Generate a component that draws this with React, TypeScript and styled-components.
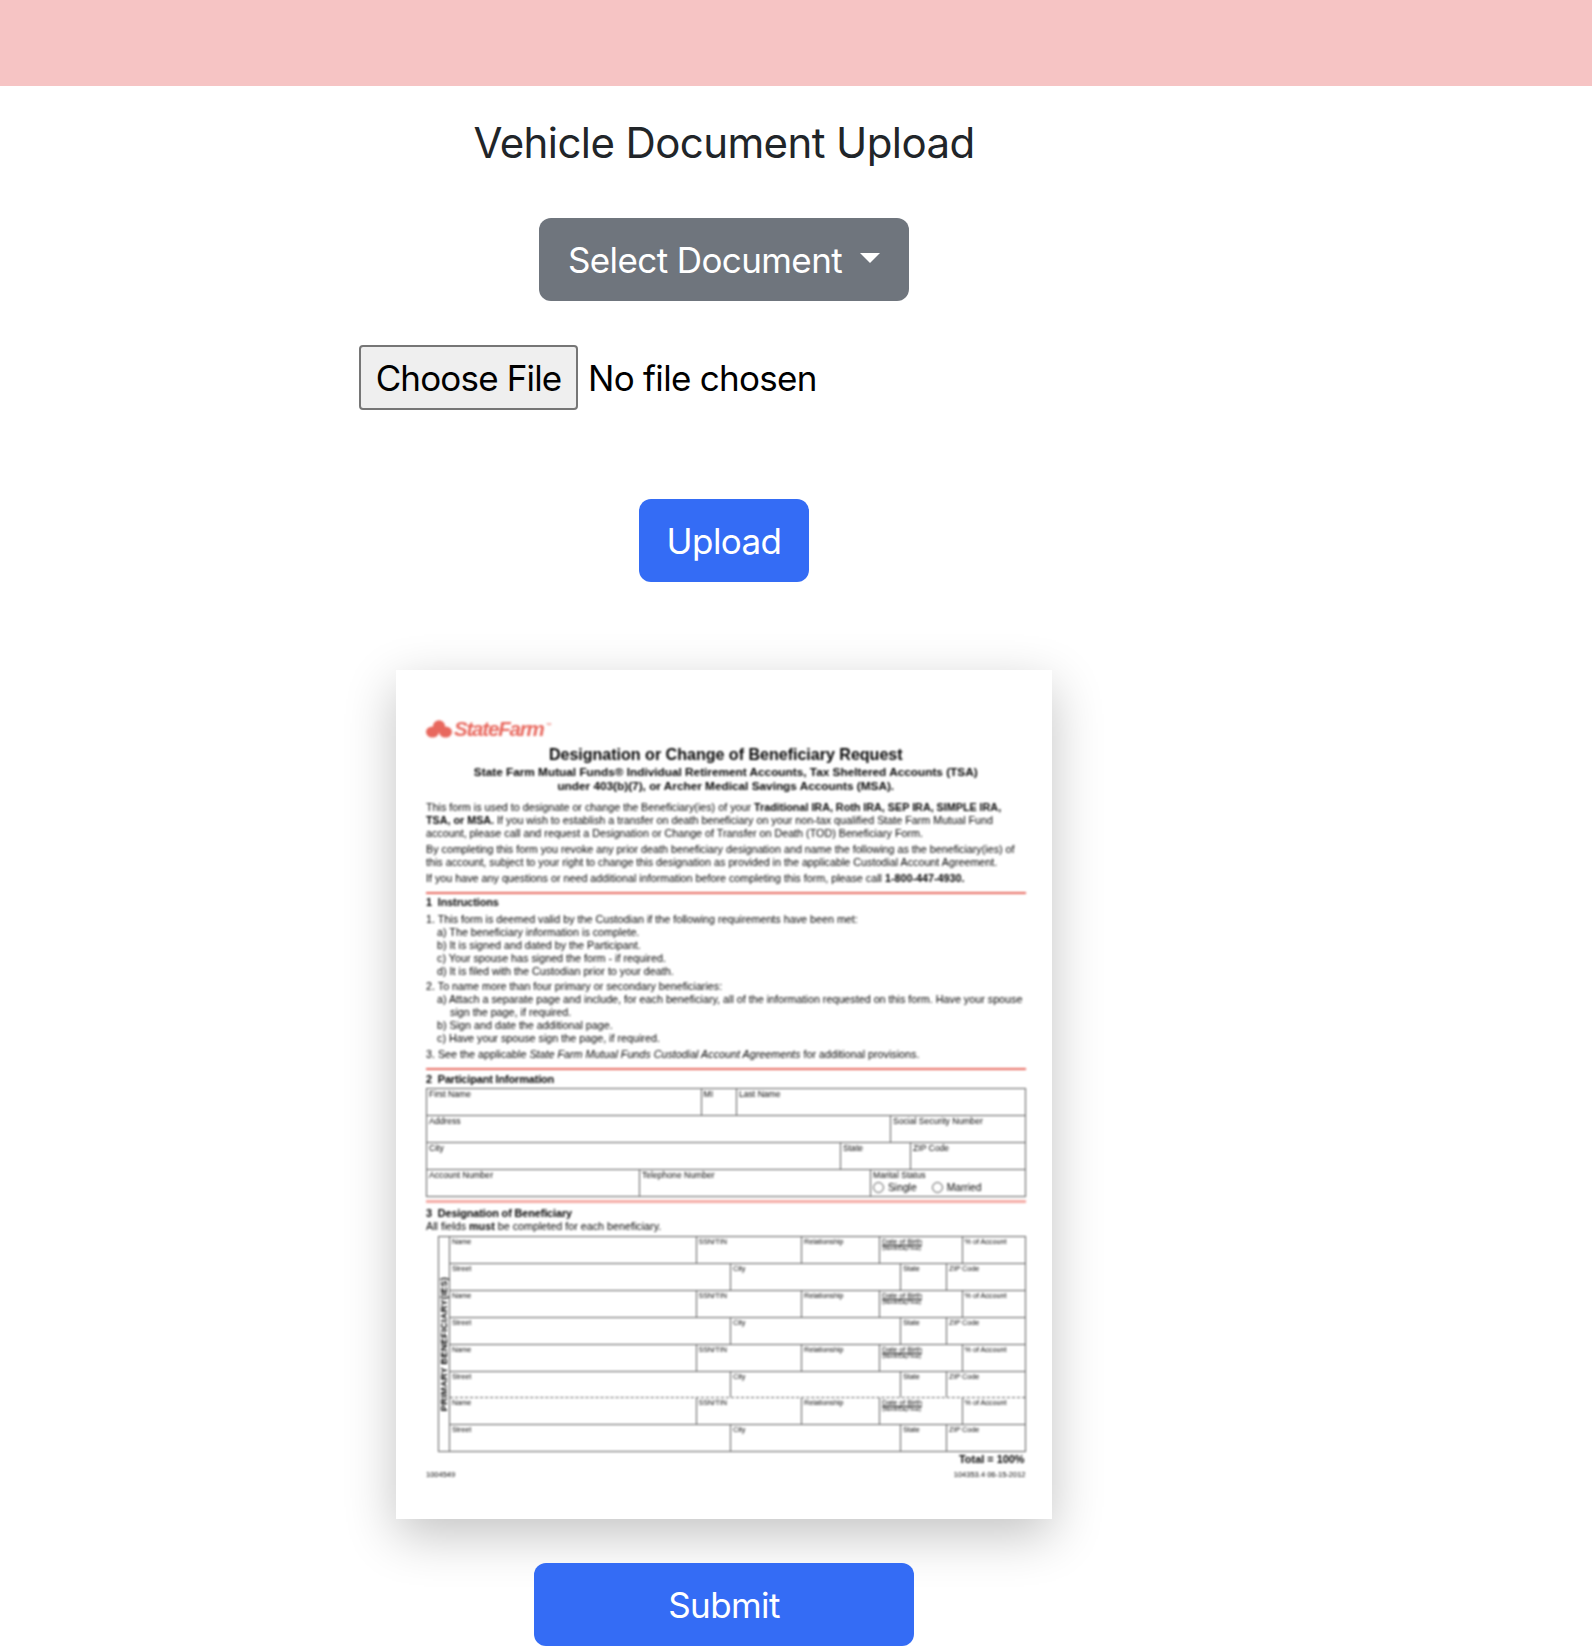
import React from "react";
import styled, { createGlobalStyle } from "styled-components";

const Global = createGlobalStyle`
  html, body { margin: 0; padding: 0; background: #fff; }
  body { font-family: Inter, "Liberation Sans", sans-serif; color: #212529; }
  * { box-sizing: border-box; }
`;

const TopBar = styled.header`
  height: 86px;
  background: #f6c4c4;
`;

const Main = styled.main`
  width: 1448px;
  display: flex;
  flex-direction: column;
  align-items: center;
`;

const Heading = styled.h3`
  margin: 32px 0 0;
  height: 50px;
  font-size: 42px;
  line-height: 50px;
  font-weight: 400;
  letter-spacing: -0.6px;
  color: #212529;
  white-space: nowrap;
`;

const Button = styled.button<{ $variant: "secondary" | "primary"; $width: number; $top: number }>`
  margin-top: ${(p) => p.$top}px;
  width: ${(p) => p.$width}px;
  height: 83px;
  border: 0;
  border-radius: 12px;
  padding: 0;
  background: ${(p) => (p.$variant === "primary" ? "#346cf5" : "#6f757d")};
  color: #fff;
  font-family: Inter, "Liberation Sans", sans-serif;
  font-size: 35px;
  letter-spacing: -0.6px;
  display: flex;
  align-items: center;
  justify-content: center;
  gap: 18px;
`;

const Caret = styled.span`
  width: 0;
  height: 0;
  border-top: 10px solid #fff;
  border-left: 10px solid transparent;
  border-right: 10px solid transparent;
  margin-top: -4px;
`;

const FileRow = styled.div`
  margin-top: 44px;
  width: 730px;
  height: 65px;
  display: flex;
  align-items: center;
  gap: 10px;
`;

const FileButton = styled.button`
  width: 219px;
  height: 65px;
  padding: 0;
  background: #efefef;
  border: 2px solid #767676;
  border-radius: 4px;
  color: #000;
  font-family: Inter, "Liberation Sans", sans-serif;
  font-size: 35px;
  letter-spacing: -0.84px;
`;

const FileStatus = styled.span`
  font-size: 35px;
  letter-spacing: -0.7px;
  color: #000;
`;

const Sheet = styled.section`
  margin-top: 88px;
  width: 656px;
  height: 849px;
  background: #fff;
  box-shadow: 0 16px 48px rgba(0, 0, 0, 0.24);
`;

const SheetInner = styled.div`
  padding: 50px 26.5px 0 30px;
  display: flex;
  flex-direction: column;
  filter: blur(0.9px);
  font-family: "Liberation Sans", sans-serif;
  color: #000;
`;

const Logo = styled.div`
  height: 18px;
  display: flex;
  align-items: center;
  gap: 1px;
`;

const LogoWord = styled.span`
  font-size: 20.5px;
  line-height: 18px;
  font-weight: 700;
  font-style: italic;
  letter-spacing: -1.2px;
  color: #e8685e;
`;

const LogoMarkTm = styled.sup`
  font-size: 6px;
  line-height: 6px;
  margin: -8px 0 0 1px;
  color: #e8685e;
`;

const DocTitle = styled.div`
  margin-top: 8px;
  height: 16px;
  font-size: 16.05px;
  line-height: 16px;
  font-weight: 700;
  text-align: center;
  white-space: nowrap;
`;

const DocSub = styled.div<{ $top?: number }>`
  margin-top: ${(p) => p.$top ?? 0}px;
  height: 15px;
  font-size: 11.8px;
  line-height: 15px;
  font-weight: 700;
  text-align: center;
  white-space: nowrap;
`;

const Line = styled.div<{ $top?: number; $indent?: number }>`
  margin-top: ${(p) => p.$top ?? 0}px;
  padding-left: ${(p) => p.$indent ?? 0}px;
  height: 13px;
  font-size: 10.75px;
  line-height: 13px;
  white-space: nowrap;
`;

const Rule = styled.div<{ $top: number }>`
  margin-top: ${(p) => p.$top}px;
  height: 2px;
  background: #e8685e;
`;

const PaleRule = styled.div`
  margin-top: 3px;
  height: 3px;
  background: #f4aaa4;
`;

const SectionHead = styled.div<{ $top: number }>`
  margin-top: ${(p) => p.$top}px;
  height: 12px;
  font-size: 10.85px;
  line-height: 12px;
  font-weight: 700;
  white-space: nowrap;
  letter-spacing: -0.1px;
`;

const FormTable = styled.div`
  margin-top: 2.5px;
  height: 109px;
  border: 1px solid #5e5e5e;
  display: grid;
  grid-auto-rows: 1fr;
`;

const Row = styled.div<{ $cols: string; $dashed?: boolean }>`
  display: grid;
  grid-template-columns: ${(p) => p.$cols};
  border-top: 1px ${(p) => (p.$dashed ? "dashed" : "solid")} #5e5e5e;
  &:first-child {
    border-top: 0;
  }
`;

const Cell = styled.div`
  padding: 1px 0 0 2px;
  font-size: 7.2px;
  line-height: 8px;
  white-space: nowrap;
  min-width: 0;
  border-left: 1px solid #5e5e5e;
  &:first-child {
    border-left: 0;
  }
`;

const FormCell = styled(Cell)`
  font-size: 8.6px;
`;

const Tiny = styled.div`
  font-size: 5px;
  line-height: 4px;
`;

const Dob = styled.span`
  text-decoration: underline;
`;

const RadioRow = styled.div`
  display: flex;
  align-items: center;
  gap: 4px;
  margin-top: 3.5px;
  font-size: 10.3px;
  line-height: 11px;
`;

const Radio = styled.span<{ $gap?: number }>`
  width: 11px;
  height: 11px;
  border: 1px solid #555;
  border-radius: 50%;
  margin-left: ${(p) => p.$gap ?? 0}px;
`;

const BeneTable = styled.div`
  margin: 2.5px 0 0 12px;
  height: 216.5px;
  display: flex;
  border: 1px solid #5e5e5e;
`;

const BeneSide = styled.div`
  width: 11px;
  display: flex;
  align-items: center;
  justify-content: center;
  border-right: 1px solid #5e5e5e;
`;

const BeneSideText = styled.span`
  writing-mode: vertical-rl;
  transform: rotate(180deg);
  font-size: 9.25px;
  font-weight: 700;
  white-space: nowrap;
  letter-spacing: 0.25px;
`;

const BeneRows = styled.div`
  flex: 1;
  display: grid;
  grid-auto-rows: 1fr;
`;

const TotalLine = styled.div`
  margin-top: 1px;
  height: 12px;
  padding-right: 1px;
  font-size: 10.9px;
  line-height: 12px;
  font-weight: 700;
  text-align: right;
`;

const SheetFooter = styled.div`
  margin-top: 4px;
  height: 12px;
  display: flex;
  justify-content: space-between;
  font-size: 7.5px;
  line-height: 12px;
`;

const nameCols = "245.5px 105.5px 78px 82.5px 1fr";
const streetCols = "280px 170px 46px 1fr";

const BeneficiaryPair = ({ dashed }: { dashed?: boolean }) => (
  <>
    <Row $cols={nameCols} $dashed={dashed}>
      <Cell>Name</Cell>
      <Cell>SSN/TIN</Cell>
      <Cell>Relationship</Cell>
      <Cell>
        <Dob>Date of Birth</Dob>
        <Tiny>(Month/Day/Year)</Tiny>
      </Cell>
      <Cell>% of Account</Cell>
    </Row>
    <Row $cols={streetCols}>
      <Cell>Street</Cell>
      <Cell>City</Cell>
      <Cell>State</Cell>
      <Cell>ZIP Code</Cell>
    </Row>
  </>
);

const LogoMark = () => (
  <svg width="27" height="18" viewBox="0 0 27 18" aria-hidden="true">
    <g fill="#e8685e">
      <ellipse cx="13" cy="6" rx="6" ry="5.8" />
      <ellipse cx="6.5" cy="12" rx="6.5" ry="5.6" />
      <ellipse cx="19.5" cy="12" rx="6.5" ry="5.6" />
    </g>
  </svg>
);

export default function App() {
  return (
    <>
      <Global />
      <TopBar />
      <Main>
        <Heading>Vehicle Document Upload</Heading>
        <Button $variant="secondary" $width={370} $top={50}>
          Select Document
          <Caret />
        </Button>
        <FileRow>
          <FileButton>Choose File</FileButton>
          <FileStatus>No file chosen</FileStatus>
        </FileRow>
        <Button $variant="primary" $width={170} $top={89}>
          Upload
        </Button>
        <Sheet>
          <SheetInner>
            <Logo>
              <LogoMark />
              <LogoWord>StateFarm</LogoWord>
              <LogoMarkTm>™</LogoMarkTm>
            </Logo>
            <DocTitle>Designation or Change of Beneficiary Request</DocTitle>
            <DocSub $top={2.5}>State Farm Mutual Funds® Individual Retirement Accounts, Tax Sheltered Accounts (TSA)</DocSub>
            <DocSub $top={-0.5}>under 403(b)(7), or Archer Medical Savings Accounts (MSA).</DocSub>
            <Line $top={6.5}>
              This form is used to designate or change the Beneficiary(ies) of your <b>Traditional IRA, Roth IRA, SEP IRA, SIMPLE IRA,</b>
            </Line>
            <Line>
              <b>TSA, or MSA.</b> If you wish to establish a transfer on death beneficiary on your non-tax qualified State Farm Mutual Fund
            </Line>
            <Line>account, please call and request a Designation or Change of Transfer on Death (TOD) Beneficiary Form.</Line>
            <Line $top={3}>
              By completing this form you revoke any prior death beneficiary designation and name the following as the beneficiary(ies) of
            </Line>
            <Line>this account, subject to your right to change this designation as provided in the applicable Custodial Account Agreement.</Line>
            <Line $top={3}>
              If you have any questions or need additional information before completing this form, please call <b>1-800-447-4930.</b>
            </Line>
            <Rule $top={7} />
            <SectionHead $top={2.5}>1&nbsp; Instructions</SectionHead>
            <Line $top={4.5}>1. This form is deemed valid by the Custodian if the following requirements have been met:</Line>
            <Line $indent={11}>a) The beneficiary information is complete.</Line>
            <Line $indent={11}>b) It is signed and dated by the Participant.</Line>
            <Line $indent={11}>c) Your spouse has signed the form - if required.</Line>
            <Line $indent={11}>d) It is filed with the Custodian prior to your death.</Line>
            <Line $top={2.5}>2. To name more than four primary or secondary beneficiaries:</Line>
            <Line $indent={11}>a) Attach a separate page and include, for each beneficiary, all of the information requested on this form. Have your spouse</Line>
            <Line $indent={24}>sign the page, if required.</Line>
            <Line $indent={11}>b) Sign and date the additional page.</Line>
            <Line $indent={11}>c) Have your spouse sign the page, if required.</Line>
            <Line $top={3}>
              3. See the applicable <i>State Farm Mutual Funds Custodial Account Agreements</i> for additional provisions.
            </Line>
            <Rule $top={6.5} />
            <SectionHead $top={3.5}>2&nbsp; Participant Information</SectionHead>
            <FormTable>
              <Row $cols="273.5px 35.5px 1fr">
                <FormCell>First Name</FormCell>
                <FormCell>MI</FormCell>
                <FormCell>Last Name</FormCell>
              </Row>
              <Row $cols="463px 1fr">
                <FormCell>Address</FormCell>
                <FormCell>Social Security Number</FormCell>
              </Row>
              <Row $cols="413px 70px 1fr">
                <FormCell>City</FormCell>
                <FormCell>State</FormCell>
                <FormCell>ZIP Code</FormCell>
              </Row>
              <Row $cols="212px 231px 1fr">
                <FormCell>Account Number</FormCell>
                <FormCell>Telephone Number</FormCell>
                <FormCell>
                  Marital Status
                  <RadioRow>
                    <Radio />
                    Single
                    <Radio $gap={11} />
                    Married
                  </RadioRow>
                </FormCell>
              </Row>
            </FormTable>
            <PaleRule />
            <SectionHead $top={4}>3&nbsp; Designation of Beneficiary</SectionHead>
            <Line $top={1.5}>
              All fields <b>must</b> be completed for each beneficiary.
            </Line>
            <BeneTable>
              <BeneSide>
                <BeneSideText>PRIMARY BENEFICIARY(IES)</BeneSideText>
              </BeneSide>
              <BeneRows>
                <BeneficiaryPair />
                <BeneficiaryPair />
                <BeneficiaryPair />
                <BeneficiaryPair dashed />
              </BeneRows>
            </BeneTable>
            <TotalLine>Total = 100%</TotalLine>
            <SheetFooter>
              <span>1004549</span>
              <span>104353.4 06-15-2012</span>
            </SheetFooter>
          </SheetInner>
        </Sheet>
        <Button $variant="primary" $width={380} $top={44}>
          Submit
        </Button>
      </Main>
    </>
  );
}
